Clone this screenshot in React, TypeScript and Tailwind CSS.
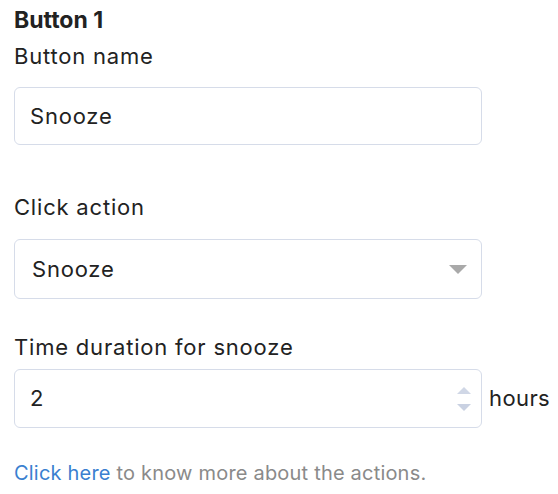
export default function App() {
  return (
    <div className="bg-white w-[558px] h-[494px] px-[14px] pt-[5px] font-['Inter','Liberation_Sans',sans-serif] text-[#222] tracking-[0.8px]">
      <div className="text-[23px] font-bold leading-[30px] tracking-normal">Button 1</div>
      <label className="block mt-[6px] text-[22px] leading-[30px]">Button name</label>
      <input
        defaultValue="Snooze"
        className="mt-[16px] w-[468px] h-[58px] rounded-[6px] border border-[#d6dce9] px-[15px] text-[22px] outline-none"
      />

      <label className="block mt-[47px] text-[22px] leading-[30px]">Click action</label>
      <div className="mt-[17px] w-[468px] h-[60px] rounded-[6px] border border-[#d6dce9] flex items-center justify-between pl-[17px] pr-[14px] text-[22px]">
        <span>Snooze</span>
        <svg width="18" height="9" viewBox="0 0 18 9">
          <path d="M0 0 L18 0 L9 9 Z" fill="#a9a9a9" />
        </svg>
      </div>

      <label className="block mt-[33px] text-[22px] leading-[30px]">Time duration for snooze</label>
      <div className="mt-[7px] flex items-center gap-[7px] whitespace-nowrap">
        <div className="w-[468px] shrink-0 h-[59px] rounded-[6px] border border-[#d6dce9] flex items-center justify-between pl-[15px] pr-[10px] text-[22px]">
          <span>2</span>
          <div className="flex flex-col gap-[10px]">
            <svg width="14" height="7" viewBox="0 0 14 7">
              <path d="M0 7 L14 7 L7 0 Z" fill="#d0d7e6" />
            </svg>
            <svg width="14" height="7" viewBox="0 0 14 7">
              <path d="M0 0 L14 0 L7 7 Z" fill="#c9d1e2" />
            </svg>
          </div>
        </div>
        <span className="text-[22px] tracking-[0.4px]">hours</span>
      </div>

      <p className="mt-[30px] text-[20px] tracking-[0.2px] text-[#8a8a8a]">
        <a className="text-[#3a7fd0] cursor-pointer">Click here</a> to know more about the actions.
      </p>
    </div>
  );
}
